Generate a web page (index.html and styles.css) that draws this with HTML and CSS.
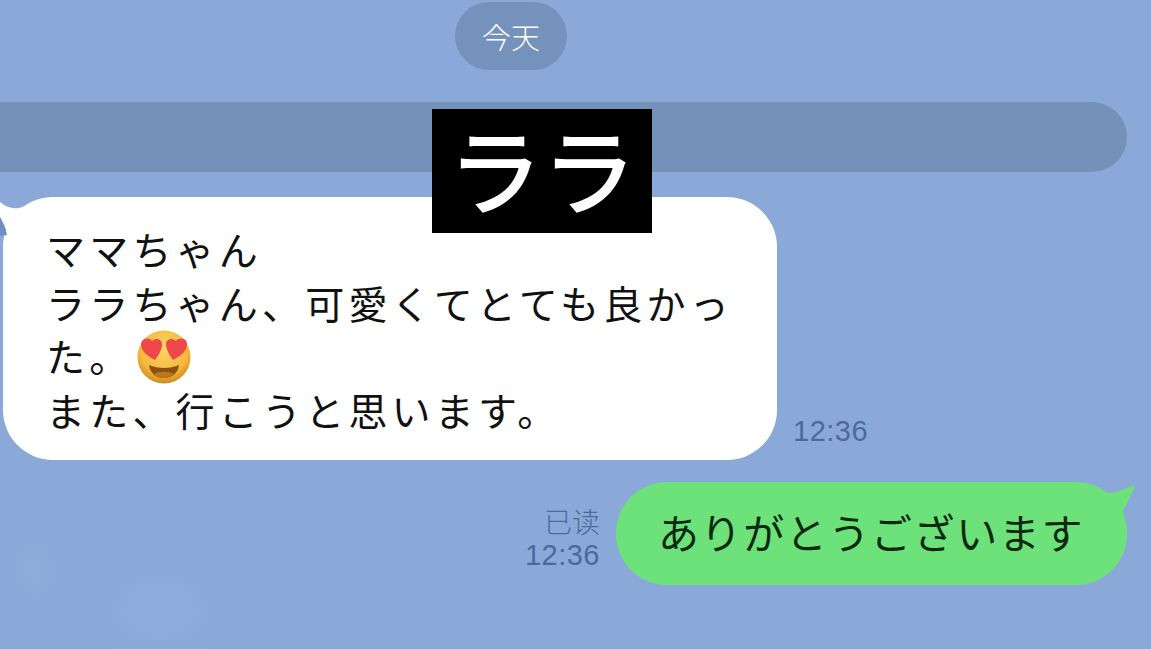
FILE: index.html
```html
<!DOCTYPE html>
<html lang="ja">

<head>
    <meta charset="UTF-8">
    <title>トーク</title>
    <link rel="stylesheet" href="styles.css">
</head>

<body>
    <div class="chat">
        <div class="date-row">
            <div class="date-pill">今天</div>
        </div>

        <div class="notice-bar"></div>
        <!-- 名前の目隠し -->
        <div class="name-mask">ララ</div>

        <div class="msg-row">
            <div class="bubble bubble-in">
                <svg class="tail tail-in" width="46" height="44" viewBox="0 0 46 44">
                    <path d="M0 10 C6 15 12 17 18 16 C26 15 34 9 44 6 L44 30 L8 43 C5 34 2 29 0 25 Z" fill="#fff" />
                    <path d="M0 25 C2 29 5 34 7 43 L0 44 Z" fill="#6f8fc4" />
                </svg>
                <div>ママちゃん</div>
                <div>ララちゃん、可愛くてとても良かっ</div>
                <div class="emoji-line">た。
                    <svg class="emoji" width="56" height="56" viewBox="0 0 56 56">
                        <defs>
                            <radialGradient id="face" cx="50%" cy="35%" r="65%">
                                <stop offset="0" stop-color="#fbd667" />
                                <stop offset="0.7" stop-color="#f5b93c" />
                                <stop offset="1" stop-color="#d08a1c" />
                            </radialGradient>
                        </defs>
                        <circle cx="28" cy="28" r="26.500" fill="url(#face)" />
                        <path d="M19 31 C11 27 5 22 5 15 C6 9 13 8 16 12 C20 8 27 10 26 17 C25 22 22 27 19 31 Z" fill="#f0474a" />
                        <path d="M37 31 C34 27 31 22 30 17 C29 10 36 8 40 12 C43 8 51 9 51 15 C51 22 45 27 37 31 Z" fill="#f0474a" />
                        <path d="M13 36 C22 40 34 40 43 36 C42 45 35 49 28 49 C21 49 14 45 13 36 Z" fill="#8a5212" />
                        <path d="M18 45 C24 42 32 42 38 45 C35 48 31 49 28 49 C25 49 21 48 18 45 Z" fill="#bf7418" />
                    </svg>
                </div>
                <div>また、行こうと思います。</div>
            </div>
            <div class="time time-in">12:36</div>
        </div>

        <div class="msg-row msg-row-out">
            <div class="meta">
                <div class="read">已读</div>
                <div class="time">12:36</div>
            </div>
            <div class="bubble bubble-out">
                <svg class="tail tail-out" width="50" height="45" viewBox="0 0 50 45">
                    <path d="M23 11 C30 11 42 7 50 2 C47 12 42 22 38 28 L40 38 L20 38 Z" fill="#6de27a" />
                </svg>
                ありがとうございます
            </div>
        </div>
    </div>
</body>

</html>
```

FILE: styles.css
```css
html,
body {
    margin: 0;
    height: 100%;
    overflow: hidden;
}

body {
    background-color: #8aa9d8;
    background-image:
        radial-gradient(ellipse 70px 50px at 160px 610px, #90aedd, transparent),
        radial-gradient(ellipse 40px 60px at 35px 570px, #8eacda, transparent);
    font-family: "Noto Sans CJK JP", "Liberation Sans", sans-serif;
}

.chat {
    position: relative;
    height: 649px;
    padding-top: 2px;
    box-sizing: border-box;
}

.date-row {
    display: flex;
    justify-content: center;
    padding-right: 129px;
}

.date-pill {
    width: 112px;
    height: 68px;
    border-radius: 34px;
    background-color: #7492bb;
    color: #fff;
    font-size: 29px;
    font-family: "Noto Sans CJK SC", sans-serif;
    font-weight: 300;
    line-height: 68px;
    text-align: center;
}

.notice-bar {
    height: 70px;
    margin: 32px 24px 0 -40px;
    border-radius: 35px;
    background-color: #7492b9;
}

.name-mask {
    position: absolute;
    z-index: 2;
    left: 432px;
    top: 109px;
    width: 220px;
    height: 124px;
    background-color: #000;
    color: #fff;
    font-size: 94px;
    font-weight: 500;
    line-height: 117px;
    text-align: center;
    white-space: nowrap;
}

.msg-row {
    display: flex;
    align-items: flex-end;
    gap: 16px;
    margin-top: 25px;
    padding-left: 3px;
}

.msg-row-out {
    justify-content: flex-end;
    margin-top: 22px;
    padding: 0 24px 0 0;
}

.bubble {
    position: relative;
    box-sizing: border-box;
    color: #111;
    font-size: 39px;
    letter-spacing: 4.200px;
    line-height: 53.700px;
    white-space: nowrap;
}

.bubble-in {
    width: 774px;
    height: 263px;
    padding: 25px 0 0 43px;
    border-radius: 50px;
    background-color: #fff;
}

.bubble-out {
    width: 511px;
    height: 103px;
    padding: 23px 0 0 42px;
    border-radius: 51px;
    background-color: #6de27a;
    color: #0c2a10;
    font-size: 41px;
    letter-spacing: 1.600px;
}

.tail {
    position: absolute;
}

.tail-in {
    left: -3px;
    top: -5px;
}

.tail-out {
    right: -8px;
    top: 0;
}

.emoji-line {
    position: relative;
}

.emoji {
    position: absolute;
    left: 90px;
    top: 0;
}

.time {
    color: #4c6a9c;
    font-family: "Liberation Sans", sans-serif;
    font-size: 29px;
    letter-spacing: 0.500px;
    line-height: 34px;
}

.time-in {
    margin-bottom: 12px;
}

.meta {
    margin-bottom: 13px;
    text-align: right;
}

.read {
    color: #4c6a9c;
    font-family: "Noto Sans CJK SC", sans-serif;
    font-size: 28px;
    font-weight: 300;
    line-height: 34px;
}
```
